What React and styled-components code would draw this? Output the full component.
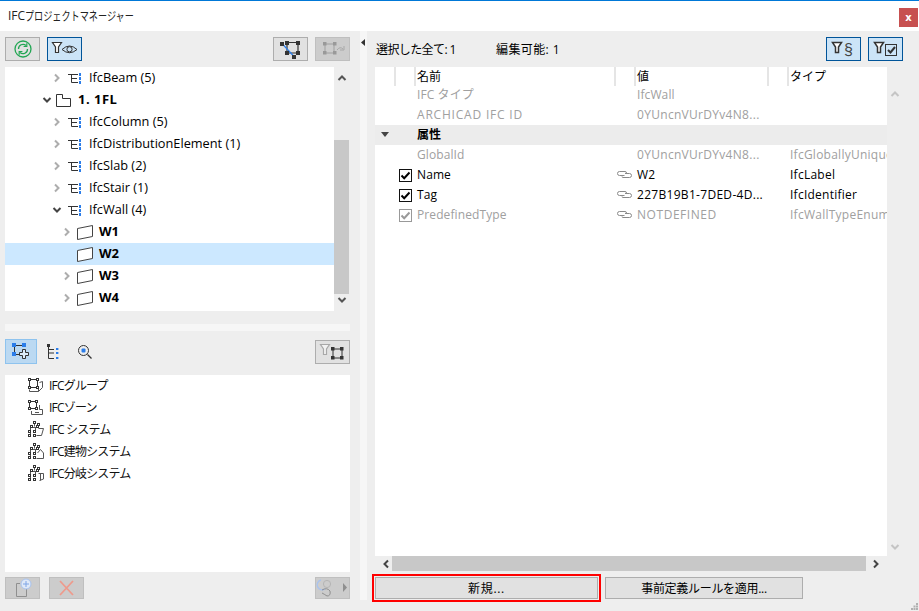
import React from 'react'
import styled, { createGlobalStyle } from 'styled-components'

const Global = createGlobalStyle`
  html, body { margin: 0; padding: 0; height: 100%; overflow: hidden; background: #eee; }
  body { font-family: "Open Sans", "Noto Sans CJK JP", sans-serif; font-size: 12px; color: #000; }
  * { box-sizing: border-box; }
  svg { display: block; }
`

const Window = styled.div`
  width: 919px;
  height: 611px;
  display: flex;
  flex-direction: column;
  border-top: 1px solid #0078d7;
  position: relative;
`
const TitleBar = styled.div`
  height: 30px;
  flex: none;
  background: #fff;
  display: flex;
  align-items: center;
  justify-content: space-between;
  padding: 0 1px 0 8px;
`
const Title = styled.div`
  font-size: 12px;
  color: #222;
  display: flex;
`
const NarrowKana = styled.span`
  display: inline-block;
  transform: scaleX(0.76);
  transform-origin: left center;
  white-space: nowrap;
`
const Close = styled.div`
  width: 19px;
  height: 19px;
  margin-top: 3px;
  background: #c75050;
  color: #fff;
  font: bold 10px "DejaVu Sans", sans-serif;
  display: flex;
  align-items: center;
  justify-content: center;
`
const Body = styled.div`
  flex: 1;
  display: flex;
  min-height: 0;
`
const LeftPanel = styled.div`
  width: 360px;
  flex: none;
  padding: 6px 10px 0 5px;
  display: flex;
  flex-direction: column;
`
const Toolbar = styled.div`
  height: 24px;
  display: flex;
  align-items: center;
  gap: ${p => p.$gap || 7}px;
  flex: none;
`
const Spacer = styled.div`
  flex: 1;
`
const IconButton = styled.div`
  width: ${p => p.$w || 35}px;
  height: ${p => p.$h || 24}px;
  flex: none;
  border: 1px solid ${p => (p.$active ? '#005499' : p.$off ? '#bfbfbf' : '#adadad')};
  background: ${p => (p.$active ? '#cce4f7' : p.$off ? '#ccc' : '#e1e1e1')};
  display: flex;
  align-items: center;
  justify-content: center;
`
const TreeWrap = styled.div`
  height: 244px;
  margin-top: 6px;
  display: flex;
  flex: none;
`
const Tree = styled.div`
  width: 329px;
  background: #fff;
`
const Row = styled.div`
  height: 22px;
  display: flex;
  align-items: center;
  padding-left: ${p => p.$depth * 10 + 36}px;
  background: ${p => (p.$selected ? '#cce8ff' : 'transparent')};
  font-size: ${p => (p.$bold ? 13 : 12.75)}px;
  font-weight: ${p => (p.$bold ? 700 : 400)};
`
const RowLabel = styled.span`
  margin-top: -2px;
  letter-spacing: ${p => (p.$story ? 0.5 : 0)}px;
`
const Chevron = styled.span`
  width: 12px;
  flex: none;
  display: flex;
  justify-content: center;
`
const RowIcon = styled.span`
  margin: 0 ${p => p.$after}px 0 ${p => p.$before}px;
  flex: none;
`
const VScroll = styled.div`
  width: 16px;
  flex: none;
  display: flex;
  flex-direction: column;
  align-items: center;
  justify-content: space-between;
  position: relative;
  padding: ${p => p.$pad || '6px 0'};
`
const VThumb = styled.div`
  position: absolute;
  left: 0;
  width: 15px;
  top: 73px;
  height: 154px;
  background: #c8c8c8;
`
const Strip = styled.div`
  height: 7px;
  margin-top: 13px;
  background: #f6f6f6;
  flex: none;
`
const SecondToolbar = styled.div`
  height: 25px;
  margin-top: 8px;
  display: flex;
  align-items: center;
  flex: none;
`
const ToolTab = styled.div`
  width: 32px;
  height: 25px;
  display: flex;
  align-items: center;
  justify-content: center;
  background: ${p => (p.$active ? '#bbd9f2' : 'transparent')};
  border: 1px solid ${p => (p.$active ? '#8ec3ee' : 'transparent')};
`
const List = styled.div`
  height: 197px;
  margin-top: 11px;
  background: #fff;
  flex: none;
`
const ListRow = styled.div`
  height: 22px;
  display: flex;
  align-items: center;
  gap: 5px;
  padding: 0 0 2px 22px;
  font-size: 12px;
  letter-spacing: -0.8px;
  color: #111;
`
const BottomBar = styled(Toolbar)`
  height: 22px;
  margin-top: 5px;
  gap: 9px;
`
const Splitter = styled.div`
  width: 7px;
  height: 569px;
  flex: none;
  background: #f6f6f6;
  padding: 8px 0 0 1px;
`
const RightPanel = styled.div`
  flex: 1;
  padding: 6px 16px 0 8px;
  display: flex;
  flex-direction: column;
  min-width: 0;
`
const StatusBar = styled(Toolbar)`
  font-size: 12px;
  padding-left: 1px;
`
const StatusText = styled.span`
  width: ${p => p.$w}px;
  letter-spacing: ${p => p.$track}px;
`
const TableWrap = styled.div`
  margin-top: 6px;
  display: grid;
  grid-template-columns: 512px 16px;
  grid-template-rows: 489px 15px;
  flex: none;
`
const Table = styled.div`
  background: #fff;
  overflow: hidden;
  font-size: 12px;
`
const columns = '19px 20px 200px 20px 133px 20px 100px'
const HeadRow = styled.div`
  display: grid;
  grid-template-columns: ${columns};
  height: 18px;
`
const HeadCell = styled.div`
  border-left: ${p => (p.$plain ? 'none' : '2px solid #e5e5e5')};
  padding: 1px 0 0 1px;
  line-height: 18px;
  font-size: 12px;
  white-space: nowrap;
`
const PropRow = styled.div`
  display: grid;
  grid-template-columns: ${columns};
  height: 20px;
  align-items: center;
  color: ${p => (p.$dim ? '#a0a0a0' : '#000')};
`
const Cell = styled.div`
  padding: 0 0 2px ${p => p.$pad ?? 3}px;
  white-space: nowrap;
  overflow: hidden;
  letter-spacing: ${p => p.$track ?? 0.1}px;
`
const Band = styled.div`
  height: 20px;
  background: #ececec;
  display: grid;
  grid-template-columns: ${columns};
  align-items: center;
  font-weight: 700;
`
const Check = styled.span`
  width: 13px;
  height: 13px;
  margin-left: 5px;
  display: flex;
  align-items: center;
  justify-content: center;
  background: #fff;
  border: 1px solid ${p => (p.$dim ? '#999' : '#111')};
`
const HScroll = styled.div`
  display: flex;
  align-items: center;
  justify-content: space-between;
  padding: 0 6px;
  position: relative;
`
const HThumb = styled.div`
  position: absolute;
  top: 0;
  bottom: 0;
  left: 17px;
  width: 474px;
  background: #c8c8c8;
`
const Footer = styled.div`
  display: flex;
  gap: 7px;
  margin-top: 6px;
`
const FootButton = styled.button`
  width: ${p => p.$w}px;
  height: 22px;
  padding: 0;
  font: inherit;
  font-size: 12px;
  letter-spacing: ${p => p.$track}px;
  color: #000;
  background: #e1e1e1;
  border: 1px solid #adadad;
  outline: ${p => (p.$marked ? '2px solid #f00' : 'none')};
  outline-offset: 1px;
`
const Grip = styled.svg`
  position: absolute;
  right: 1px;
  bottom: 1px;
`

const Dark = '#333'
const Blue = '#2b7de9'

const Arrow = ({ dir = 'up', color = '#555', size = 10 }) => {
  const paths = {
    up: 'M1.5 7 L5 3.5 L8.5 7',
    down: 'M1.5 3 L5 6.5 L8.5 3',
    left: 'M7 1.5 L3.5 5 L7 8.5',
    right: 'M3 1.5 L6.5 5 L3 8.5',
  }
  return (
    <svg width={size} height={size} viewBox="0 0 10 10" fill="none">
      <path d={paths[dir]} stroke={color} strokeWidth="2" />
    </svg>
  )
}

const Funnel = ({ x = 0, y = 0, color = Dark, fill = 'none', weight = 1.2 }) => (
  <path
    d={`M${x + 0.5} ${y + 0.5} H${x + 9.5} L${x + 6.5} ${y + 5} V${y + 10.5} H${x + 3.5} V${y + 5} Z`}
    stroke={color}
    fill={fill}
    strokeWidth={weight}
  />
)

const Squares = ({ pts, size = 4, color = Dark }) =>
  pts.map(([x, y]) => (
    <rect key={`${x}-${y}`} x={x} y={y} width={size} height={size} fill={color} />
  ))

const SyncIcon = () => (
  <svg width="33" height="22" viewBox="0 0 33 22" fill="none" stroke="#22a653">
    <circle cx="17" cy="11" r="8" strokeWidth="1.3" />
    <path d="M12.5 11 A4.5 4.5 0 0 1 20 7.5" strokeWidth="1.3" />
    <path d="M21.5 11 A4.5 4.5 0 0 1 14 14.5" strokeWidth="1.3" />
    <path d="M20.8 5.2 V8.5 H17.6" strokeWidth="1.2" />
    <path d="M13.2 16.8 V13.5 H16.4" strokeWidth="1.2" />
  </svg>
)

const FilterEyeIcon = () => (
  <svg width="33" height="22" viewBox="0 0 33 22" fill="none">
    <Funnel x={4} y={4} fill="#fff" />
    <path d="M14 11.5 Q21.5 4.5 29 11.5 Q21.5 18 14 11.5 Z" stroke={Dark} />
    <circle cx="21.5" cy="11.3" r="2.6" stroke={Dark} />
  </svg>
)

const NodeIcon = () => (
  <svg width="33" height="22" viewBox="0 0 33 22" fill="none">
    <path d="M13 4.5 H24 V15 H13 Z" stroke={Dark} strokeWidth="1.2" />
    <path d="M8 5.5 L20 18.5" stroke={Blue} strokeWidth="1.2" />
    <Squares pts={[[11, 3], [22, 3], [11, 13], [22, 13], [6, 4], [18, 17]]} />
  </svg>
)

const NodeOffIcon = () => (
  <svg width="33" height="22" viewBox="0 0 33 22" fill="none">
    <path d="M9 6 H18 V15 H9 Z" stroke="#a0a0a0" />
    <Squares pts={[[7, 4], [17, 4], [7, 13], [17, 13]]} size={3.5} color="#999" />
    <path d="M21 12 Q24 8 27 11 M28 8 V12 H24" stroke="#a8a8a8" />
  </svg>
)

const FilterSectionIcon = () => (
  <svg width="33" height="22" viewBox="0 0 33 22" fill="none">
    <Funnel x={5} y={4} fill="#fff" weight={1.5} />
    <text x="17" y="17" fontSize="16" fill="#444" fontFamily="Liberation Sans, sans-serif">§</text>
  </svg>
)

const FilterCheckIcon = () => (
  <svg width="33" height="22" viewBox="0 0 33 22" fill="none">
    <Funnel x={5} y={4} fill="#fff" weight={1.5} />
    <rect x="16.5" y="6.5" width="11" height="11" stroke={Dark} />
    <path d="M19 12 L21.5 14.5 L26 9" stroke={Dark} strokeWidth="2" />
  </svg>
)

const AddNodeIcon = () => (
  <svg width="22" height="20" viewBox="0 0 22 20" fill="none">
    <path d="M4.5 3.5 H14 M4.5 3.5 V12.5 M4.5 12.5 H9" stroke={Dark} />
    <Squares pts={[[2, 1], [12, 1], [2, 10]]} color={Blue} />
    <path d="M12.5 7.5 H15.5 V10.5 H18.5 V13.5 H15.5 V16.5 H12.5 V13.5 H9.5 V10.5 H12.5 Z" stroke={Dark} fill="#dcecf9" />
  </svg>
)

const TreeToolIcon = () => (
  <svg width="14" height="16" viewBox="0 0 14 16" fill="none">
    <rect x="1" y="0" width="3" height="3" fill={Dark} />
    <path d="M2.5 3 V14.5 H8 M2.5 9 H8 M2.5 5.5 H8" stroke={Dark} />
    {[4, 8, 13].map(y => (
      <rect key={y} x="10" y={y} width="2.4" height="2" fill={Blue} />
    ))}
  </svg>
)

const SearchToolIcon = () => (
  <svg width="16" height="16" viewBox="0 0 16 16" fill="none">
    <circle cx="6.5" cy="6.5" r="5" stroke={Dark} />
    <rect x="4.5" y="4.5" width="4" height="4" rx="1" fill={Blue} />
    <path d="M10.5 10.5 L14.5 14.5" stroke={Dark} strokeWidth="1.2" />
  </svg>
)

const FilterNodeIcon = () => (
  <svg width="33" height="22" viewBox="0 0 33 22" fill="none">
    <Funnel x={4} y={3} color="#a8a8a8" fill="#f2f2f2" />
    <path d="M17 8 H26 V17 H17 Z" stroke={Dark} />
    <Squares pts={[[15, 6], [24, 6], [15, 15], [24, 15]]} size={3.5} />
  </svg>
)

const TypeIcon = () => (
  <svg width="14" height="11" viewBox="0 0 14 11" fill="none">
    <path d="M0 1.5 H10 M3.5 1.5 V9.5 H10 M3.5 5.5 H9" stroke={Dark} />
    {[0, 4, 8].map(y => (
      <rect key={y} x="11" y={y} width="2" height="3" fill={Blue} />
    ))}
  </svg>
)

const StoryIcon = () => (
  <svg width="15" height="13" viewBox="0 0 15 13" fill="none">
    <path d="M0.5 12.5 V0.5 H6.5 V4.5 H14.5 V12.5 Z" stroke={Dark} />
  </svg>
)

const WallIcon = () => (
  <svg width="16" height="15" viewBox="0 0 16 15" fill="none">
    <path d="M0.5 3.5 L15.5 0.5 V11.5 L0.5 14.5 Z" stroke="#444" fill="#fff" />
  </svg>
)

const Corners = ({ pts, color = '#333' }) =>
  pts.map(([x, y]) => (
    <rect key={`${x}-${y}`} x={x + 0.5} y={y + 0.5} width="2" height="2" stroke={color} fill="#fff" />
  ))

const GroupIcon = () => (
  <svg width="17" height="16" viewBox="0 0 17 16" fill="none">
    <path d="M2.5 2.5 H10.5 V10.5 H2.5 Z" stroke="#333" />
    <Corners pts={[[1, 1], [9, 1], [1, 9], [9, 9]]} />
    <path d="M12.5 5.5 L15.5 4.5 V10.5 L11.5 14.5 H2.5 V12.5 M11.5 14.5 V12" stroke="#555" />
  </svg>
)

const ZoneIcon = () => (
  <svg width="17" height="16" viewBox="0 0 17 16" fill="none">
    <path d="M2.5 2.5 H9.5 V9.5 H2.5 Z" stroke="#333" />
    <Corners pts={[[1, 1], [8, 1], [1, 8], [8, 8]]} />
    <path d="M12.5 6 V10.5 H15.5 V15.5 H4.5 V12 M8 13.5 H12" stroke="#555" />
  </svg>
)

const SystemIcon = ({ kind }) => (
  <svg width="17" height="16" viewBox="0 0 17 16" fill="none">
    <path d="M7.5 3 V5.5 M3 6.5 H11 M3.5 6.5 V10 M8.5 6.5 V10 M3.5 12 V13" stroke="#555" />
    <Corners pts={[[6, 0], [10, 2], [3, 4], [9, 4], [1, 9], [6, 9], [1, 13], [6, 13]]} />
    {kind === 'box' && <path d="M11.5 7.5 H16.5 L14.5 14.5 H9.5" stroke="#555" />}
    {kind === 'house' && <path d="M10.5 10 L13.5 6.5 L16.5 10 V15.5 H9.5" stroke="#555" />}
    {kind === 'branch' && <path d="M11.5 8.5 H16.5 V14 L12.5 15.5 M13.5 8.5 V15.5" stroke="#555" />}
  </svg>
)

const LinkIcon = ({ color = '#8a8a8a' }) => (
  <svg width="15" height="9" viewBox="0 0 15 9" fill="none">
    <path d="M6 1.5 H2.5 Q0.5 1.5 0.5 3.5 Q0.5 5.5 2.5 5.5 H7.5" stroke={color} />
    <path d="M8 3.5 H12.5 Q14.5 3.5 14.5 5.5 Q14.5 7.5 12.5 7.5 H6 Q5 7.5 5 6.5" stroke={color} />
    <path d="M4 1.5 H8 Q9.5 1.5 9.5 3" stroke={color} />
  </svg>
)

const CheckMark = ({ color = '#000' }) => (
  <svg width="11" height="11" viewBox="0 0 11 11" fill="none">
    <path d="M1.5 5.5 L4.2 8.2 L9.5 2.5" stroke={color} strokeWidth="2" />
  </svg>
)

const PlusDocIcon = () => (
  <svg width="33" height="20" viewBox="0 0 33 20" fill="none">
    <path d="M14 5.5 H10.5 V18.5 H20.5 V11" stroke="#8f8f8f" />
    <circle cx="20" cy="6" r="5" fill="#dfe9f8" stroke="#a9c3ee" />
    <path d="M17 6 H23 M20 3 V9" stroke="#7fa5e6" />
  </svg>
)

const CrossIcon = () => (
  <svg width="33" height="20" viewBox="0 0 33 20" fill="none">
    <path d="M10 3 L23 17 M23 3 L10 17" stroke="#ee9a8c" strokeWidth="1.8" />
  </svg>
)

const RenameIcon = () => (
  <svg width="33" height="20" viewBox="0 0 33 20" fill="none">
    <path d="M5 2 A5 5 0 1 0 9 11" stroke="#a9c3ee" strokeWidth="1.3" />
    <circle cx="11" cy="6" r="3.6" stroke="#b5b5b5" />
    <path d="M6 12 Q11 9 14 13 Q15 18 11 18 Q8 16 6 15" stroke="#8f8f8f" />
    <path d="M27 5 L31 9.5 L27 14 Z" fill="#8f8f8f" />
  </svg>
)

const treeRows = [
  { depth: 1, label: 'IfcBeam (5)' },
  { depth: 0, label: '1. 1FL', open: true },
  { depth: 1, label: 'IfcColumn (5)' },
  { depth: 1, label: 'IfcDistributionElement (1)' },
  { depth: 1, label: 'IfcSlab (2)' },
  { depth: 1, label: 'IfcStair (1)' },
  { depth: 1, label: 'IfcWall (4)', open: true },
  { depth: 2, label: 'W1' },
  { depth: 2, label: 'W2', selected: true },
  { depth: 2, label: 'W3' },
  { depth: 2, label: 'W4' },
]

const TreeRow = ({ depth, label, open, selected }) => {
  const bold = depth !== 1
  return (
    <Row $depth={depth} $selected={selected} $bold={bold}>
      <Chevron>
        {!selected && <Arrow dir={open ? 'down' : 'right'} color={open ? '#444' : '#adadad'} />}
      </Chevron>
      {depth === 0 && <RowIcon $before={3} $after={7}><StoryIcon /></RowIcon>}
      {depth === 1 && <RowIcon $before={5} $after={7}><TypeIcon /></RowIcon>}
      {depth === 2 && <RowIcon $before={4} $after={6}><WallIcon /></RowIcon>}
      <RowLabel $story={depth === 0}>{label}</RowLabel>
    </Row>
  )
}

const listRows = [
  { label: 'IFCグループ', icon: <GroupIcon /> },
  { label: 'IFCゾーン', icon: <ZoneIcon /> },
  { label: 'IFC システム', icon: <SystemIcon kind="box" /> },
  { label: 'IFC建物システム', icon: <SystemIcon kind="house" /> },
  { label: 'IFC分岐システム', icon: <SystemIcon kind="branch" /> },
]

const PropLine = ({ name, value, type, checked, link, dim, nameTrack, valueTrack }) => (
  <PropRow $dim={dim}>
    <span />
    {checked ? <Check $dim={dim}><CheckMark color={dim ? '#999' : '#000'} /></Check> : <span />}
    <Cell $track={nameTrack}>{name}</Cell>
    {link ? <Cell $pad={3}><LinkIcon /></Cell> : <span />}
    <Cell $track={valueTrack}>{value}</Cell>
    <span />
    <Cell $track={0.25}>{type}</Cell>
  </PropRow>
)

export default function App() {
  return (
    <>
      <Global />
      <Window>
        <TitleBar>
          <Title>IFC<NarrowKana>プロジェクトマネージャー</NarrowKana></Title>
          <Close>x</Close>
        </TitleBar>
        <Body>
          <LeftPanel>
            <Toolbar>
              <IconButton><SyncIcon /></IconButton>
              <IconButton $active><FilterEyeIcon /></IconButton>
              <Spacer />
              <IconButton><NodeIcon /></IconButton>
              <IconButton $off><NodeOffIcon /></IconButton>
            </Toolbar>
            <TreeWrap>
              <Tree>
                {treeRows.map(r => <TreeRow key={r.label} {...r} />)}
              </Tree>
              <VScroll>
                <Arrow dir="up" color="#555" />
                <VThumb />
                <Arrow dir="down" color="#555" />
              </VScroll>
            </TreeWrap>
            <Strip />
            <SecondToolbar>
              <ToolTab $active><AddNodeIcon /></ToolTab>
              <ToolTab><TreeToolIcon /></ToolTab>
              <ToolTab><SearchToolIcon /></ToolTab>
              <Spacer />
              <IconButton><FilterNodeIcon /></IconButton>
            </SecondToolbar>
            <List>
              {listRows.map(r => (
                <ListRow key={r.label}>{r.icon}{r.label}</ListRow>
              ))}
            </List>
            <BottomBar>
              <IconButton $off $h={22}><PlusDocIcon /></IconButton>
              <IconButton $off $h={22}><CrossIcon /></IconButton>
              <Spacer />
              <IconButton $off $h={22}><RenameIcon /></IconButton>
            </BottomBar>
          </LeftPanel>
          <Splitter>
            <svg width="4" height="7" viewBox="0 0 4 7"><path d="M4 0 V7 L0 3.5 Z" fill="#333" /></svg>
          </Splitter>
          <RightPanel>
            <StatusBar>
              <StatusText $w={113} $track={-0.6}>選択した全て: 1</StatusText>
              <StatusText $w={100} $track={0.4}>編集可能: 1</StatusText>
              <Spacer />
              <IconButton $active><FilterSectionIcon /></IconButton>
              <IconButton $active><FilterCheckIcon /></IconButton>
            </StatusBar>
            <TableWrap>
              <Table>
                <HeadRow>
                  <HeadCell $plain />
                  <HeadCell />
                  <HeadCell>名前</HeadCell>
                  <HeadCell />
                  <HeadCell>値</HeadCell>
                  <HeadCell />
                  <HeadCell>タイプ</HeadCell>
                </HeadRow>
                <PropLine dim name="IFC タイプ" value="IfcWall" />
                <PropLine dim name="ARCHICAD IFC ID" nameTrack={0.8} value="0YUncnVUrDYv4N8..." valueTrack={0.3} />
                <Band>
                  <Cell $pad={6}>
                    <svg width="8" height="5" viewBox="0 0 8 5"><path d="M0 0 H8 L4 5 Z" fill="#444" /></svg>
                  </Cell>
                  <span />
                  <Cell>属性</Cell>
                </Band>
                <PropLine dim name="GlobalId" value="0YUncnVUrDYv4N8..." valueTrack={0.3} type="IfcGloballyUniqueId" />
                <PropLine checked link name="Name" value="W2" type="IfcLabel" />
                <PropLine checked link name="Tag" value="227B19B1-7DED-4D..." valueTrack={0.3} type="IfcIdentifier" />
                <PropLine checked link dim name="PredefinedType" value="NOTDEFINED" valueTrack={0.55} type="IfcWallTypeEnum" />
              </Table>
              <VScroll $pad="22px 0 4px">
                <Arrow dir="up" color="#c4c4c4" />
                <Arrow dir="down" color="#c4c4c4" />
              </VScroll>
              <HScroll>
                <Arrow dir="left" color="#444" />
                <HThumb />
                <Arrow dir="right" color="#444" />
              </HScroll>
            </TableWrap>
            <Footer>
              <FootButton $w={223} $marked $track={0.7}>新規...</FootButton>
              <FootButton $w={198} $track={-0.3}>事前定義ルールを適用...</FootButton>
            </Footer>
          </RightPanel>
        </Body>
        <Grip width="7" height="7" viewBox="0 0 7 7" fill="#b0b0b0">
          <rect x="5" y="0" width="2" height="2" />
          <rect x="2.5" y="2.5" width="2" height="2" />
          <rect x="5" y="2.5" width="2" height="2" />
          <rect x="0" y="5" width="2" height="2" />
          <rect x="2.5" y="5" width="2" height="2" />
          <rect x="5" y="5" width="2" height="2" />
        </Grip>
      </Window>
    </>
  )
}
